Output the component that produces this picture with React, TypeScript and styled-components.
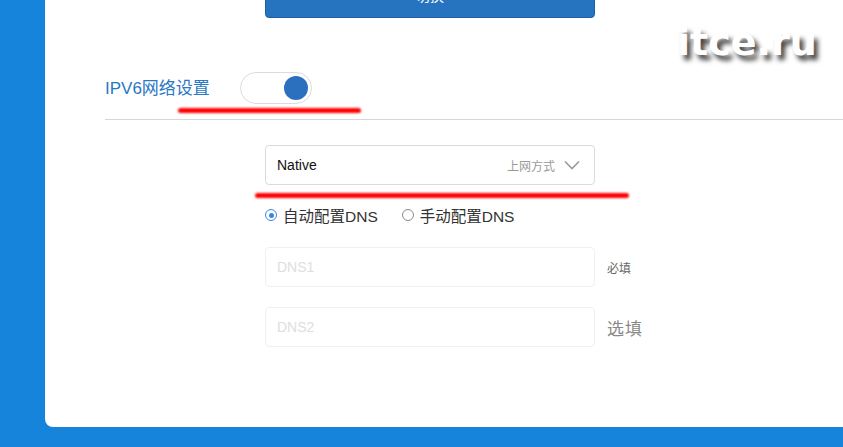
import React from "react";
import styled, { createGlobalStyle } from "styled-components";

const GlobalStyle = createGlobalStyle`
  html, body {
    margin: 0;
    padding: 0;
    background: #1784dc;
  }
  body {
    font-family: "Liberation Sans", "Noto Sans CJK SC", sans-serif;
  }
`;

const Page = styled.div`
  position: relative;
  width: 843px;
  height: 447px;
  overflow: hidden;
  background: #1784dc;
  padding-left: 45px;
  box-sizing: border-box;
`;

const Card = styled.div`
  position: relative;
  margin-top: -24px;
  height: 451px;
  width: 820px;
  background: #fff;
  border-bottom-left-radius: 8px;
  box-sizing: border-box;
  display: flex;
  flex-direction: column;
`;

const FieldColumn = styled.div`
  display: flex;
  flex-direction: column;
  padding-left: 220px;
`;

const SubmitButton = styled.button`
  width: 330px;
  height: 42px;
  border: 1px solid #1c5ea8;
  border-radius: 0 0 4px 4px;
  background: #2674c0;
  color: #fff;
  font-family: "Noto Sans CJK SC", sans-serif;
  font-size: 14px;
  line-height: 42px;
  padding: 0;
  text-align: center;
`;

const ButtonLabel = styled.span`
  display: block;
  margin-top: -4px;
`;

const SectionHeader = styled.div`
  display: flex;
  align-items: center;
  margin: 54px 0 0 60px;
  height: 32px;
`;

const Title = styled.span`
  font-size: 17px;
  color: #2a78c4;
  width: 135px;
  line-height: 32px;
  margin-top: 2px;
`;

const Toggle = styled.div<{ $on: boolean }>`
  width: 64px;
  height: 30px;
  border: 1px solid #dcdcdc;
  border-radius: 16px;
  background: #fff;
  display: flex;
  align-items: center;
  justify-content: ${(p) => (p.$on ? "flex-end" : "flex-start")};
  padding: 0 3px;
`;

const Knob = styled.span`
  width: 24px;
  height: 24px;
  border-radius: 50%;
  background: #2a70be;
`;

const Divider = styled.div`
  margin: 15px 0 0 60px;
  height: 1px;
  background: #d6d6d6;
`;

const Select = styled.div`
  margin-top: 25px;
  width: 330px;
  height: 40px;
  box-sizing: border-box;
  border: 1px solid #dadada;
  border-radius: 4px;
  display: flex;
  align-items: center;
  padding: 0 14px 0 11px;
`;

const SelectValue = styled.span`
  flex: 1;
  font-size: 14px;
  color: #111;
`;

const SelectHint = styled.span`
  font-size: 12px;
  color: #9a9a9a;
  margin-right: 9px;
`;

const RadioGroup = styled.div`
  display: flex;
  align-items: center;
  gap: 24px;
  margin-top: 21px;
  height: 18px;
`;

const RadioOption = styled.label`
  display: flex;
  align-items: center;
  gap: 6px;
  font-size: 15.5px;
  color: #333;
`;

const RadioDot = styled.span<{ $checked: boolean }>`
  width: 12px;
  height: 12px;
  box-sizing: border-box;
  border-radius: 50%;
  border: 1.5px solid ${(p) => (p.$checked ? "#3a86e0" : "#8a8a8a")};
  display: flex;
  align-items: center;
  justify-content: center;
  &::after {
    content: "";
    width: 5px;
    height: 5px;
    border-radius: 50%;
    background: ${(p) => (p.$checked ? "#3a86e0" : "transparent")};
  }
`;

const InputRow = styled.div<{ $gap: number }>`
  display: flex;
  align-items: center;
  margin-top: ${(p) => p.$gap}px;
`;

const TextInput = styled.input`
  width: 330px;
  height: 40px;
  box-sizing: border-box;
  border: 1px solid #f0f0f0;
  border-radius: 4px;
  padding: 0 11px;
  font-family: "Liberation Sans", sans-serif;
  font-size: 14px;
  outline: none;
  &::placeholder {
    color: #dedede;
  }
`;

const FieldNote = styled.span<{ $size: number; $color: string }>`
  margin-left: 12px;
  font-size: ${(p) => p.$size}px;
  color: ${(p) => p.$color};
  letter-spacing: ${(p) => (p.$size > 14 ? "1px" : "0")};
`;

const Watermark = styled.div`
  position: absolute;
  top: 20px;
  left: 677px;
  font-family: "DejaVu Sans", sans-serif;
  font-weight: bold;
  font-size: 38px;
  color: #fff;
  text-shadow: 4px 5px 5px rgba(0, 0, 0, 0.75);
`;

const Stroke = styled.div<{ $x: number; $y: number; $w: number }>`
  position: absolute;
  left: ${(p) => p.$x}px;
  top: ${(p) => p.$y}px;
  width: ${(p) => p.$w}px;
  height: 5px;
  border-radius: 3px;
  background: #ff0000;
  filter: blur(0.8px);
`;

const Chevron = () => (
  <svg width="16" height="10" viewBox="0 0 16 10">
    <path d="M1 1.5 L8 8.5 L15 1.5" fill="none" stroke="#9a9a9a" strokeWidth="1.6" />
  </svg>
);

export default function App() {
  return (
    <>
      <GlobalStyle />
      <Page>
        <Card>
          <FieldColumn>
            <SubmitButton>
              <ButtonLabel>切换</ButtonLabel>
            </SubmitButton>
          </FieldColumn>
          <SectionHeader>
            <Title>IPV6网络设置</Title>
            <Toggle $on>
              <Knob />
            </Toggle>
          </SectionHeader>
          <Divider />
          <FieldColumn>
            <Select>
              <SelectValue>Native</SelectValue>
              <SelectHint>上网方式</SelectHint>
              <Chevron />
            </Select>
            <RadioGroup>
              <RadioOption>
                <RadioDot $checked />
                自动配置DNS
              </RadioOption>
              <RadioOption>
                <RadioDot $checked={false} />
                手动配置DNS
              </RadioOption>
            </RadioGroup>
            <InputRow $gap={23}>
              <TextInput placeholder="DNS1" />
              <FieldNote $size={12} $color="#666">必填</FieldNote>
            </InputRow>
            <InputRow $gap={20}>
              <TextInput placeholder="DNS2" />
              <FieldNote $size={17} $color="#888">选填</FieldNote>
            </InputRow>
          </FieldColumn>
        </Card>
        <Stroke $x={178} $y={108} $w={183} />
        <Stroke $x={255} $y={193} $w={374} />
        <Watermark>itce.ru</Watermark>
      </Page>
    </>
  );
}
